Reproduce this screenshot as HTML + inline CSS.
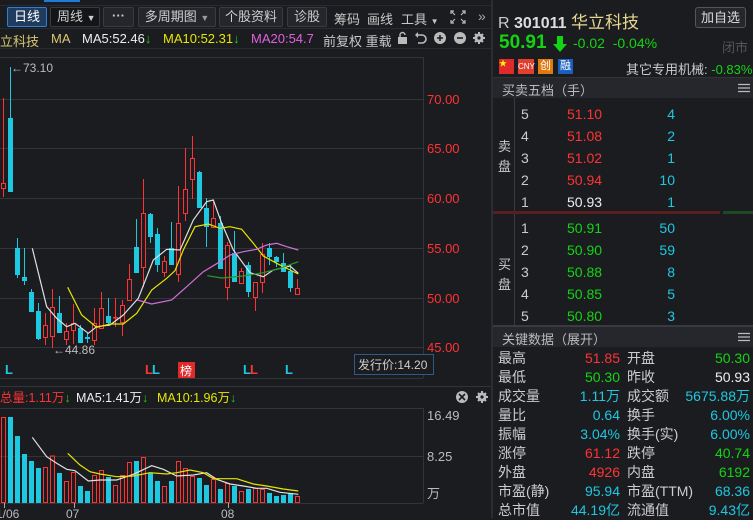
<!DOCTYPE html>
<html><head><meta charset="utf-8"><style>
*{margin:0;padding:0;box-sizing:border-box}
body{width:753px;height:518px;background:#1b1c20;font-family:"Liberation Sans","Noto Sans CJK SC",sans-serif;color:#c8c8c8;position:relative;overflow:hidden;font-size:12px}
.a{position:absolute;white-space:nowrap}
.btn{position:absolute;top:7px;height:20px;border:1px solid #3a3b40;background:#25262b;color:#cfcfcf;font-size:13px;line-height:18px;text-align:center;border-radius:2px}
.r{color:#ff3333}.g{color:#13d413}.c{color:#1ec8e0}.w{color:#eee}.y{color:#e6e600}.m{color:#e060e0}
</style></head><body>
<div class="a" style="left:44px;top:0;width:36px;height:2px;background:#1e7bd8"></div>
<div class="a" style="left:0;top:5px;width:492px;height:1px;background:#2a2b30"></div>
<div class="btn" style="left:7px;width:40px;border-color:#2f7fd6;background:#1f3b5e;color:#fff">日线</div>
<div class="btn" style="left:50px;width:50px;background:#141518;text-align:left;padding-left:6px">周线 <span style="font-size:9px">▼</span></div>
<div class="btn" style="left:103px;width:31px;font-weight:bold;line-height:15px">···</div>
<div class="btn" style="left:138px;width:78px">多周期图 <span style="font-size:9px;color:#999">▼</span></div>
<div class="btn" style="left:219px;width:64px">个股资料</div>
<div class="btn" style="left:287px;width:40px">诊股</div>
<div class="a" style="left:334px;top:9px;font-size:13px">筹码</div>
<div class="a" style="left:367px;top:9px;font-size:13px">画线</div>
<div class="a" style="left:401px;top:9px;font-size:13px">工具 <span style="font-size:8px">▼</span></div>
<svg class="a" style="left:450px;top:10px" width="16" height="14" viewBox="0 0 16 14" fill="none" stroke="#bbb" stroke-width="1.2"><path d="M1 4V1h3M1 1l4 4M15 4V1h-3M15 1l-4 4M1 10v3h3M1 13l4-4M15 10v3h-3M15 13l-4-4"/></svg>
<div class="a" style="left:478px;top:8px;font-size:14px;color:#aaa">»</div>
<div class="a" style="left:0;top:28px;width:492px;height:1px;background:#2a2b30"></div>
<div class="a" style="left:0;top:31px;font-size:13px;color:#d8c870">立科技</div>
<div class="a" style="left:51px;top:31px;font-size:13px;color:#d8c870">MA</div>
<div class="a w" style="left:82px;top:31px;font-size:13px">MA5:52.46<span class="g">↓</span></div>
<div class="a y" style="left:163px;top:31px;font-size:13px">MA10:52.31<span class="g">↓</span></div>
<div class="a m" style="left:251px;top:31px;font-size:13px;width:62px;overflow:hidden">MA20:54.73</div>
<div class="a" style="left:323px;top:31px;font-size:13px">前复权 重载</div>
<svg class="a" style="left:396px;top:31px" width="96" height="14" viewBox="0 0 96 14" fill="#bbb"><rect x="2" y="6" width="9" height="7"/><path d="M4 6V4a2.5 2.5 0 0 1 5 0" fill="none" stroke="#bbb" stroke-width="1.4"/><path d="M21 4h5a4 4 0 0 1 0 8h-4" fill="none" stroke="#bbb" stroke-width="1.6"/><path d="M19 4l3-3v6z"/><circle cx="44" cy="7" r="6"/><path d="M41 7h6M44 4v6" stroke="#1b1c20" stroke-width="1.6"/><circle cx="64" cy="7" r="6"/><path d="M61 7h6" stroke="#1b1c20" stroke-width="1.6"/><circle cx="83" cy="7" r="4.5"/><path d="M83 1v12M77 7h12M79 3l8 8M87 3l-8 8" stroke="#bbb" stroke-width="2"/><circle cx="83" cy="7" r="1.6" fill="#1b1c20"/></svg>
<div class="a" style="left:0;top:48px;width:492px;height:1px;background:#2a2b30"></div>

<svg class="a" style="left:0;top:49px" width="492" height="469" viewBox="0 49 492 469">
<g stroke="#33343a" stroke-width="1">
<path d="M0 57.5H423M0 99.5H423M0 148.5H423M0 198.5H423M0 248.5H423M0 298.5H423M0 347.5H423"/>
<path d="M423.5 57V378M423.5 408V503M0 456.5H423M0 503.5H423M0 408.5H423M0 386.5H492M0 378.5H423"/>
</g>
<g font-size="13" fill="#ff3333"><text x="427" y="104">70.00</text><text x="427" y="153">65.00</text><text x="427" y="203">60.00</text><text x="427" y="253">55.00</text><text x="427" y="303">50.00</text><text x="427" y="352">45.00</text></g>
<text x="11" y="72" font-size="12" fill="#bbb">←73.10</text>
<text x="53" y="354" font-size="12" fill="#bbb">←44.86</text>
<g font-size="13" font-weight="bold"><text x="5" y="374" fill="#1ec8e0">L</text><text x="145" y="374" fill="#ff3333">L</text><text x="152" y="374" fill="#1ec8e0">L</text><text x="243" y="374" fill="#1ec8e0">L</text><text x="250" y="374" fill="#ff3333">L</text><text x="285" y="374" fill="#1ec8e0">L</text></g>
<rect x="178" y="362" width="17" height="16" fill="#e02a2a"/><text x="180" y="375" font-size="12" fill="#fff">榜</text>
<rect x="354.5" y="354.5" width="79" height="20" fill="#1b1c20" stroke="#2c5a8a"/><text x="358" y="369" font-size="12" fill="#ccc">发行价:14.20</text>
<g stroke-width="1">
<path d="M3.5 98V197" stroke="#ff3333"/><rect x="1.5" y="183.5" width="4" height="5" fill="#1b1c20" stroke="#ff3333"/>
<path d="M10.5 67V192" stroke="#1ec8e0"/><rect x="8" y="118" width="5" height="74" fill="#1ec8e0"/>
<path d="M17.5 238V278" stroke="#1ec8e0"/><rect x="15" y="248" width="5" height="27" fill="#1ec8e0"/>
<path d="M24.5 248V285" stroke="#1ec8e0"/><rect x="22" y="277" width="5" height="4" fill="#1ec8e0"/>
<path d="M31.5 289V312" stroke="#1ec8e0"/><rect x="29" y="292" width="5" height="20" fill="#1ec8e0"/>
<path d="M38.5 303V340" stroke="#1ec8e0"/><rect x="36" y="311" width="5" height="28" fill="#1ec8e0"/>
<path d="M45.5 313V345" stroke="#ff3333"/><rect x="43.5" y="325.5" width="4" height="12" fill="#1b1c20" stroke="#ff3333"/>
<path d="M52.5 289V348" stroke="#ff3333"/><rect x="50.5" y="307.5" width="4" height="29" fill="#1b1c20" stroke="#ff3333"/>
<path d="M59.5 296V333" stroke="#1ec8e0"/><rect x="57" y="313" width="5" height="20" fill="#1ec8e0"/>
<path d="M66.5 323V345" stroke="#ff3333"/><rect x="64.5" y="331.5" width="4" height="8" fill="#1b1c20" stroke="#ff3333"/>
<path d="M73.5 304V344" stroke="#ff3333"/><rect x="71.5" y="323.5" width="4" height="7" fill="#1b1c20" stroke="#ff3333"/>
<path d="M80.5 325V343" stroke="#1ec8e0"/><rect x="78" y="328" width="5" height="15" fill="#1ec8e0"/>
<path d="M87.5 333V343" stroke="#1ec8e0"/><rect x="85" y="337" width="5" height="2" fill="#1ec8e0"/>
<path d="M94.5 308V345" stroke="#ff3333"/><rect x="92.5" y="323.5" width="4" height="17" fill="#1b1c20" stroke="#ff3333"/>
<path d="M101.5 292V328" stroke="#ff3333"/><rect x="99.5" y="308.5" width="4" height="20" fill="#1b1c20" stroke="#ff3333"/>
<path d="M108.5 298V326" stroke="#1ec8e0"/><rect x="106" y="316" width="5" height="7" fill="#1ec8e0"/>
<path d="M115.5 298V327" stroke="#ff3333"/><rect x="113" y="317" width="5" height="1.5" fill="#ff3333"/>
<path d="M122.5 300V336" stroke="#ff3333"/><rect x="120.5" y="305.5" width="4" height="17" fill="#1b1c20" stroke="#ff3333"/>
<path d="M129.5 264V300" stroke="#ff3333"/><rect x="127.5" y="279.5" width="4" height="21" fill="#1b1c20" stroke="#ff3333"/>
<path d="M136.5 219V273" stroke="#1ec8e0"/><rect x="134" y="247" width="5" height="26" fill="#1ec8e0"/>
<path d="M143.5 179V287" stroke="#ff3333"/><rect x="141.5" y="213.5" width="4" height="54" fill="#1b1c20" stroke="#ff3333"/>
<path d="M150.5 213V243" stroke="#1ec8e0"/><rect x="148" y="214" width="5" height="23" fill="#1ec8e0"/>
<path d="M157.5 228V272" stroke="#1ec8e0"/><rect x="155" y="234" width="5" height="31" fill="#1ec8e0"/>
<path d="M164.5 256V277" stroke="#ff3333"/><rect x="162.5" y="261.5" width="4" height="11" fill="#1b1c20" stroke="#ff3333"/>
<path d="M171.5 222V265" stroke="#1ec8e0"/><rect x="169" y="248" width="5" height="17" fill="#1ec8e0"/>
<path d="M178.5 186V282" stroke="#ff3333"/><rect x="176.5" y="223.5" width="4" height="51" fill="#1b1c20" stroke="#ff3333"/>
<path d="M185.5 148V221" stroke="#ff3333"/><rect x="183.5" y="189.5" width="4" height="24" fill="#1b1c20" stroke="#ff3333"/>
<path d="M192.5 136V199" stroke="#ff3333"/><rect x="190.5" y="158.5" width="4" height="21" fill="#1b1c20" stroke="#ff3333"/>
<path d="M199.5 171V208" stroke="#1ec8e0"/><rect x="197" y="172" width="5" height="36" fill="#1ec8e0"/>
<path d="M206.5 198V247" stroke="#1ec8e0"/><rect x="204" y="208" width="5" height="19" fill="#1ec8e0"/>
<path d="M213.5 202V227" stroke="#ff3333"/><rect x="211.5" y="218.5" width="4" height="9" fill="#1b1c20" stroke="#ff3333"/>
<path d="M220.5 216V269" stroke="#1ec8e0"/><rect x="218" y="223" width="5" height="46" fill="#1ec8e0"/>
<path d="M227.5 242V300" stroke="#ff3333"/><rect x="225.5" y="245.5" width="4" height="42" fill="#1b1c20" stroke="#ff3333"/>
<path d="M234.5 231V282" stroke="#1ec8e0"/><rect x="232" y="253" width="5" height="29" fill="#1ec8e0"/>
<path d="M241.5 268V284" stroke="#ff3333"/><rect x="239.5" y="271.5" width="4" height="12" fill="#1b1c20" stroke="#ff3333"/>
<path d="M248.5 262V297" stroke="#1ec8e0"/><rect x="246" y="265" width="5" height="27" fill="#1ec8e0"/>
<path d="M255.5 282V311" stroke="#ff3333"/><rect x="253.5" y="282.5" width="4" height="15" fill="#1b1c20" stroke="#ff3333"/>
<path d="M262.5 243V293" stroke="#ff3333"/><rect x="260.5" y="254.5" width="4" height="28" fill="#1b1c20" stroke="#ff3333"/>
<path d="M269.5 243V265" stroke="#1ec8e0"/><rect x="267" y="248" width="5" height="9" fill="#1ec8e0"/>
<path d="M276.5 256V267" stroke="#1ec8e0"/><rect x="274" y="257" width="5" height="5" fill="#1ec8e0"/>
<path d="M283.5 253V272" stroke="#1ec8e0"/><rect x="281" y="263" width="5" height="9" fill="#1ec8e0"/>
<path d="M290.5 265V292" stroke="#1ec8e0"/><rect x="288" y="271" width="5" height="17" fill="#1ec8e0"/>
<path d="M297.5 279V294" stroke="#ff3333"/><rect x="295.5" y="288.5" width="4" height="6" fill="#1b1c20" stroke="#ff3333"/>
</g>
<g fill="none" stroke-width="1.2">
<polyline stroke="#e0e0e0" points="32.3,248.3 46.7,306.7 56.7,318.3 66.7,326.7 75,323.3 88.3,333.3 96.7,326.7 110,325 123.3,315 138.3,298.3 153.3,260 166.7,249.3 180,250 193.3,220 206.7,201.7 213.3,200 221.7,223.3 233.3,250 250,272.7 263.3,276.7 273.3,270 290,266 298.3,273.3"/>
<polyline stroke="#e6e600" points="67.7,287.3 81.7,315 96.7,327.3 110,324 123.3,324 136.7,313.3 151.7,290 166.7,278.3 175,270.7 183.3,250 195,226.7 208.3,224 220,228.3 230,226.7 241.7,229.3 253.3,243.3 263.3,256 276.7,263.3 290,270 298.3,274"/>
<polyline stroke="#d070d8" points="137.3,300 151.7,304 171.7,300 186.7,286.7 203.3,271.7 220,261.7 230,255 243.3,251.7 256.7,249.3 266.7,245 276.7,243.3 286.7,246.7 298.3,250"/>
<polyline stroke="#2a9a2a" points="207.3,275.7 221.7,278 243.3,276 263.3,272.7 280,268.3 298.3,261.7"/>
</g>
<text x="0" y="402" font-size="12.5" fill="#ff3333">总量:1.11万<tspan fill="#13d413">↓</tspan></text>
<text x="76" y="402" font-size="12.5" fill="#eee">MA5:1.41万<tspan fill="#13d413">↓</tspan></text>
<text x="157" y="402" font-size="12.5" fill="#e6e600">MA10:1.96万<tspan fill="#13d413">↓</tspan></text>
<circle cx="462" cy="397" r="6" fill="#bbb"/><path d="M459 394l6 6M465 394l-6 6" stroke="#1b1c20" stroke-width="1.6"/>
<circle cx="482" cy="397" r="4.5" fill="#bbb"/><path d="M482 391v12M476 397h12M478 393l8 8M486 393l-8 8" stroke="#bbb" stroke-width="2"/><circle cx="482" cy="397" r="1.6" fill="#1b1c20"/>
<g font-size="13" fill="#bbb"><text x="427" y="420">16.49</text><text x="427" y="461">8.25</text><text x="427" y="498">万</text></g>
<g stroke-width="1">
<rect x="1.5" y="417.5" width="4" height="85" fill="none" stroke="#ff3333"/>
<rect x="8" y="417" width="5" height="86" fill="#1ec8e0"/>
<rect x="15" y="436" width="5" height="67" fill="#1ec8e0"/>
<rect x="22" y="454" width="5" height="49" fill="#1ec8e0"/>
<rect x="29" y="461" width="5" height="42" fill="#1ec8e0"/>
<rect x="36" y="468" width="5" height="35" fill="#1ec8e0"/>
<rect x="43.5" y="467.5" width="4" height="35" fill="none" stroke="#ff3333"/>
<rect x="50.5" y="456" width="4" height="46.5" fill="none" stroke="#ff3333"/>
<rect x="57" y="473" width="5" height="30" fill="#1ec8e0"/>
<rect x="64.5" y="481.5" width="4" height="21" fill="none" stroke="#ff3333"/>
<rect x="71.5" y="472.5" width="4" height="30" fill="none" stroke="#ff3333"/>
<rect x="78" y="486" width="5" height="17" fill="#1ec8e0"/>
<rect x="85" y="491" width="5" height="12" fill="#1ec8e0"/>
<rect x="92.5" y="475.5" width="4" height="27" fill="none" stroke="#ff3333"/>
<rect x="99.5" y="470.5" width="4" height="32" fill="none" stroke="#ff3333"/>
<rect x="106" y="477" width="5" height="26" fill="#1ec8e0"/>
<rect x="113.5" y="485.5" width="4" height="17" fill="none" stroke="#ff3333"/>
<rect x="120.5" y="475.5" width="4" height="27" fill="none" stroke="#ff3333"/>
<rect x="127.5" y="462.5" width="4" height="40" fill="none" stroke="#ff3333"/>
<rect x="134" y="461" width="5" height="42" fill="#1ec8e0"/>
<rect x="141.5" y="457.5" width="4" height="45" fill="none" stroke="#ff3333"/>
<rect x="148" y="473" width="5" height="30" fill="#1ec8e0"/>
<rect x="155" y="481" width="5" height="22" fill="#1ec8e0"/>
<rect x="162.5" y="486.5" width="4" height="16" fill="none" stroke="#ff3333"/>
<rect x="169" y="481" width="5" height="22" fill="#1ec8e0"/>
<rect x="176.5" y="461.5" width="4" height="41" fill="none" stroke="#ff3333"/>
<rect x="183.5" y="468.5" width="4" height="34" fill="none" stroke="#ff3333"/>
<rect x="190.5" y="476.5" width="4" height="26" fill="none" stroke="#ff3333"/>
<rect x="197" y="478" width="5" height="25" fill="#1ec8e0"/>
<rect x="204" y="485" width="5" height="18" fill="#1ec8e0"/>
<rect x="211.5" y="479.5" width="4" height="23" fill="none" stroke="#ff3333"/>
<rect x="218" y="489" width="5" height="14" fill="#1ec8e0"/>
<rect x="225.5" y="483.5" width="4" height="19" fill="none" stroke="#ff3333"/>
<rect x="232" y="486" width="5" height="17" fill="#1ec8e0"/>
<rect x="239.5" y="491.5" width="4" height="11" fill="none" stroke="#ff3333"/>
<rect x="246" y="489" width="5" height="14" fill="#1ec8e0"/>
<rect x="253.5" y="488.5" width="4" height="14" fill="none" stroke="#ff3333"/>
<rect x="260.5" y="489.5" width="4" height="13" fill="none" stroke="#ff3333"/>
<rect x="267" y="493" width="5" height="10" fill="#1ec8e0"/>
<rect x="274" y="496" width="5" height="7" fill="#1ec8e0"/>
<rect x="281" y="495" width="5" height="8" fill="#1ec8e0"/>
<rect x="288" y="493" width="5" height="10" fill="#1ec8e0"/>
<rect x="295.5" y="496.5" width="4" height="6" fill="none" stroke="#ff3333"/>
</g>
<g fill="none" stroke-width="1.2">
<polyline stroke="#e0e0e0" points="32.3,437.3 46.7,456.7 56.7,463.3 66.7,469.3 75,470.7 88.3,481 100,480 116.7,480 133.3,474.3 151.7,465.7 163.3,469.3 176.7,476 193.3,475 206.7,472.7 216.7,479.3 230,484 243.3,486 256.7,488.3 266.7,488.3 280,492.3 298.3,494.3"/>
<polyline stroke="#e6e600" points="67.7,453.3 80,465 90,471.7 100,474 116.7,476.7 133.3,476 150,472.7 166.7,474 176.7,472.7 190,470 203.3,472.7 213.3,478.7 236.7,478.7 253.3,484 266.7,486 283.3,489 298.3,491"/>
</g>
<path d="M4.5 503v5M74.5 503v5M228.5 503v5" stroke="#aaa"/>
<g font-size="12" fill="#bbb"><text x="-4" y="518">1/06</text><text x="66" y="518">07</text><text x="221" y="518">08</text></g>
</svg>

<div class="a" style="left:491px;top:0;width:2px;height:518px;background:#2c2d33"></div>
<div class="a" style="left:498px;top:8px;font-size:16px;color:#ccc">R <b style="color:#ddd">301011</b> <span style="color:#e8d890;font-size:17px">华立科技</span></div>
<div class="a" style="left:695px;top:7px;width:51px;height:21px;border:1px solid #555;border-radius:3px;background:#26272c;color:#ddd;font-size:13px;text-align:center;line-height:19px">加自选</div>
<div class="a g" style="left:499px;top:32px;font-size:19px;font-weight:bold">50.91</div>
<svg class="a" style="left:553px;top:36px" width="14" height="16" viewBox="0 0 14 16"><path d="M4 0h6v8h4l-7 8-7-8h4z" fill="#13d413"/></svg>
<div class="a g" style="left:573px;top:35px;font-size:14px">-0.02&nbsp;&nbsp;-0.04%</div>
<div class="a" style="left:722px;top:37px;font-size:13px;color:#555">闭市</div>
<div class="a" style="left:499px;top:59px;width:15px;height:15px;background:#e02a2a;color:#ff0;font-size:8px;line-height:10px">★</div>
<div class="a" style="left:518px;top:59px;width:16px;height:15px;background:#e04030;color:#fff;font-size:8px;line-height:15px;text-align:center">CNY</div>
<div class="a" style="left:538px;top:59px;width:15px;height:15px;background:#e07a10;color:#fff;font-size:11px;line-height:15px;text-align:center">创</div>
<div class="a" style="left:558px;top:59px;width:15px;height:15px;background:#1a5fc0;color:#fff;font-size:11px;line-height:15px;text-align:center">融</div>
<div class="a" style="left:626px;top:59px;font-size:13px;color:#ccc">其它专用机械: <span class="g">-0.83%</span></div>
<div class="a" style="left:493px;top:77px;width:260px;height:21px;background:#26272c;border-top:1px solid #333"></div>
<div class="a" style="left:502px;top:80px;font-size:13px;color:#bbb">买卖五档（手）</div>
<svg class="a" style="left:738px;top:83px" width="12" height="10"><path d="M0 1.5h12M0 5h12M0 8.5h12" stroke="#bbb" stroke-width="1.3"/></svg>
<div class="a" style="left:514px;top:98px;width:1px;height:227px;background:#3a3b40"></div>
<div class="a" style="left:498px;top:137px;font-size:13px;line-height:20px;width:14px;color:#ccc">卖<br>盘</div>
<div class="a" style="left:498px;top:255px;font-size:13px;line-height:20px;width:14px;color:#ccc">买<br>盘</div>
<div class="a" style="left:493px;top:211px;width:227px;height:3px;background:#5a1d20"></div>
<div class="a" style="left:723px;top:211px;width:30px;height:3px;background:#1d4a22"></div>
<div class="a" style="left:521px;top:103px;font-size:14px;line-height:22px;color:#ccc">5<br>4<br>3<br>2<br>1</div>
<div class="a r" style="left:567px;top:103px;font-size:14px;line-height:22px">51.10<br>51.08<br>51.02<br>50.94<br><span class="w">50.93</span></div>
<div class="a c" style="left:640px;top:103px;width:35px;text-align:right;font-size:14px;line-height:22px">4<br>2<br>1<br>10<br>1</div>
<div class="a" style="left:521px;top:217px;font-size:14px;line-height:22px;color:#ccc">1<br>2<br>3<br>4<br>5</div>
<div class="a g" style="left:567px;top:217px;font-size:14px;line-height:22px">50.91<br>50.90<br>50.88<br>50.85<br>50.80</div>
<div class="a c" style="left:640px;top:217px;width:35px;text-align:right;font-size:14px;line-height:22px">50<br>59<br>8<br>5<br>3</div>
<div class="a" style="left:493px;top:325px;width:260px;height:22px;background:#26272c;border-top:2px solid #3a3b40"></div>
<div class="a" style="left:502px;top:329px;font-size:13px;color:#bbb">关键数据（展开）</div>
<svg class="a" style="left:738px;top:332px" width="12" height="10"><path d="M0 1.5h12M0 5h12M0 8.5h12" stroke="#bbb" stroke-width="1.3"/></svg>
<div class="a" style="left:498px;top:349px;font-size:14px;line-height:19px;color:#ccc">最高<br>最低<br>成交量<br>量比<br>振幅<br>涨停<br>外盘<br>市盈(静)<br>总市值</div>
<div class="a" style="left:560px;top:349px;width:60px;text-align:right;font-size:14px;line-height:19px"><span class="r">51.85</span><br><span class="g">50.30</span><br><span class="c">1.11万</span><br><span class="c">0.64</span><br><span class="c">3.04%</span><br><span class="r">61.12</span><br><span class="r">4926</span><br><span class="c">95.94</span><br><span class="c">44.19亿</span></div>
<div class="a" style="left:627px;top:349px;font-size:14px;line-height:19px;color:#ccc">开盘<br>昨收<br>成交额<br>换手<br>换手(实)<br>跌停<br>内盘<br>市盈(TTM)<br>流通值</div>
<div class="a" style="left:660px;top:349px;width:90px;text-align:right;font-size:14px;line-height:19px"><span class="g">50.30</span><br><span class="w">50.93</span><br><span class="c">5675.88万</span><br><span class="c">6.00%</span><br><span class="c">6.00%</span><br><span class="g">40.74</span><br><span class="g">6192</span><br><span class="c">68.36</span><br><span class="c">9.43亿</span></div>
</body></html>
